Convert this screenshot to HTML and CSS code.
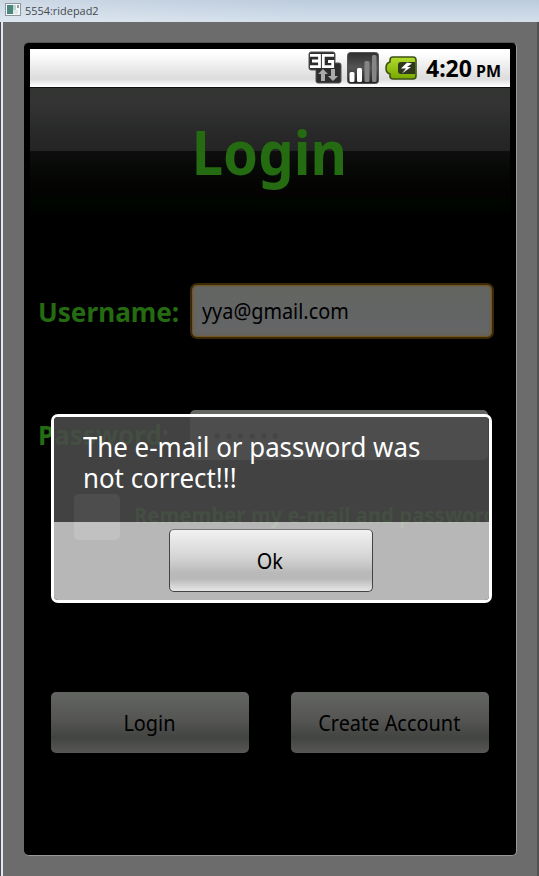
FILE: index.html
```html
<!DOCTYPE html>
<html lang="en">
<head>
<meta charset="utf-8">
<title>5554:ridepad2</title>
<link rel="stylesheet" href="styles.css">
</head>
<body>
<div class="window">
  <header class="titlebar">
    <svg class="app-icon" width="16" height="13" viewBox="0 0 16 13"><rect x=".5" y=".5" width="15" height="12" fill="#f4f8f8" stroke="#8c989f"/><rect x="2" y="2" width="6" height="9" fill="#4d8581"/><path d="M8 2h3v5H8z" fill="#bfd5d2"/><path d="M8 7h5v4H8z" fill="#dce9e6"/><path d="M13 2v3" stroke="#444"/></svg>
    <span class="window-title">5554:ridepad2</span>
  </header>
  <main class="desk">
    <div class="device">
      <div class="status">
        <svg class="net" width="34" height="33" viewBox="0 0 34 33"><path d="M3 1h22q2 0 2 2v9h4q2 0 2 2v16q0 2-2 2H10q-2 0-2-2V19H3q-2 0-2-2V3q0-2 2-2z" fill="#2d2d2d" stroke="#555"/><path d="M2 4.300h9.500v11.400H2M4 10h7.500M26 4.300H15.300v11.400h9.400v-5.200H20" fill="none" stroke="#fff" stroke-width="2.800"/><path d="M15 18l5 5h-3v7h-4v-7h-3zM25 30l-5-5h3v-7h4v7h3z" fill="#aaa"/></svg>
        <svg class="signal" width="32" height="32" viewBox="0 0 32 32"><defs><linearGradient id="sg" x2="0" y2="1"><stop stop-color="#303030"/><stop offset=".5" stop-color="#555"/><stop offset="1" stop-color="#222"/></linearGradient></defs><rect x=".5" y=".5" width="31" height="31" rx="3" fill="url(#sg)" stroke="#555"/><rect x="2.500" y="20" width="5" height="10" rx="1.500" fill="#fff"/><rect x="10" y="16" width="5" height="14" rx="1.500" fill="#fff"/><rect x="17.500" y="9" width="5" height="21" rx="1.500" fill="#858585"/><rect x="25" y="3" width="4.500" height="27" rx="1.500" fill="#858585"/></svg>
        <svg class="battery" width="32" height="24" viewBox="0 0 32 24"><defs><linearGradient id="bg" x2="0" y2="1"><stop stop-color="#b0dc2c"/><stop offset="1" stop-color="#78a800"/></linearGradient></defs><path d="M8 1h20q3 0 3 3v16q0 3-3 3H8q-3 0-3-3v-2q-4-1-4-6t4-6V4q0-3 3-3z" fill="url(#bg)" stroke="#3d5214" stroke-width="1.600"/><path d="M16 6h14v12H16q-3 0-3-3V9q0-3 3-3z" fill="#30371f"/><path d="M22 6.500l-6 6h5l-4 5 9-6.500h-4l5-3.500z" fill="#fff"/></svg>
        <span class="clock"><span class="fit time">4:20</span><span class="fit meridiem">PM</span></span>
      </div>
      <div class="app">
        <div class="banner"><h1 class="fit">Login</h1></div>
        <div class="row user-row"><label class="fit">Username:</label><div class="field focused"><span class="fit email">yya@gmail.com</span></div></div>
        <div class="row pass-row"><label class="fit">Password:</label><div class="field"><span class="dots">••••••</span></div></div>
        <div class="row remember"><i class="check"></i><span class="fit remember-text">Remember my e-mail and password</span></div>
        <div class="actions"><div class="btn dim"><span class="fit">Login</span></div><div class="btn dim"><span class="fit">Create Account</span></div></div>
      </div>
      <section class="dialog" role="alertdialog">
        <div class="message"><span class="fit">The e-mail or password was<br>not correct!!!</span></div>
        <div class="dialog-foot"><div class="btn ok"><span class="fit">Ok</span></div></div>
      </section>
    </div>
  </main>
</div>
</body>
</html>
```

FILE: styles.css
```css
* { box-sizing: border-box; }
body { margin: 0; font-family: "Noto Sans", sans-serif; color: #000; }
.window { width: 539px; height: 876px; display: flex; flex-direction: column; overflow: hidden; background: #6c6c6c; }
.titlebar { height: 22px; flex: none; display: flex; align-items: flex-start; gap: 4px; padding: 3px 0 0 5px; background: linear-gradient(90deg, rgba(255,255,255,.25), transparent 60%), linear-gradient(#bccbdc, #d3dfeb); }
.window-title { font: 11.5px/16px "Open Sans", sans-serif; color: #44494e; transform: scaleX(.95); transform-origin: left; }
.desk { flex: 1; border-left: 1px solid #4b4d55; box-shadow: inset 2px 0 #e4e6f0, inset -2px 0 #525252; padding: 20px 22px 20px 22px; }
.device { position: relative; margin-left: 1px; width: 493px; height: 814px; padding: 6px; background: #000; border: solid #565656; border-width: 1px 1px 1px 0; border-right-color: #999; border-bottom-color: #999; border-radius: 5px; }
.fit { display: inline-block; white-space: nowrap; transform-origin: left; }
.status { width: 480px; height: 38px; display: flex; align-items: flex-start; background: linear-gradient(#fff 10%, #dedede 75%, #dedede 80%, #fff 98%); }
.net { margin: 2px 5px 0 278px; }
.signal { margin-top: 3px; }
.battery { margin: 7px 0 0 6px; }
.clock { display: flex; align-items: baseline; margin: 2px 0 0 9px; font-weight: 700; line-height: 34px; }
.time { font-size: 23px; width: 50px; }
.meridiem { font-size: 16px; }
.app { width: 480px; height: 762px; overflow: hidden; }
.banner { height: 127px; text-align: center; border-top: 1px solid #111; background: linear-gradient(#323432 0, #333433 16px, #2f2f30 28px, #292a29 40px, #232423 63px, #0e0e0e 63px, #050805 85px, #040202 106px, #000600 112px, #000300 122px, #000 127px); }
h1 { margin: 0; font-size: 61px; line-height: 128px; color: #246b12; }
h1.fit { transform-origin: center; transform: translateX(-1px) scaleX(.92); }
.row { display: flex; align-items: center; }
label { width: 152px; font-size: 26px; font-weight: 700; line-height: 36px; color: #246b12; }
label.fit { transform: translateY(1px) scaleX(1.005); }
.user-row { margin: 69px 0 0 8px; height: 56px; }
.field { width: 298px; height: 50px; border-radius: 5px; background: linear-gradient(#646662, #636566 70%, #666563); display: flex; align-items: center; }
.focused { width: 304px; height: 56px; border: 2px solid #3b2809; border-radius: 7px; box-shadow: inset 0 0 0 1px #6f571f, inset 0 0 4px #70593b; padding-left: 10px; }
.email { font-size: 22.5px; line-height: 30px; transform: scaleX(.882); }
.pass-row { margin: 71px 0 0 8px; height: 50px; }
.pass-row label.fit { transform: none; }
.dots { padding-left: 23px; letter-spacing: 3.4px; font-size: 22px; line-height: 30px; color: #222; }
.remember { margin: 34px 0 0 44px; height: 46px; width: 415px; overflow: hidden; }
.check { flex: none; width: 46px; height: 46px; border-radius: 5px; background: #626462; margin-right: 14px; }
.remember-text { font-size: 22px; font-weight: 700; color: #246b12; transform: translateY(-3px) scaleX(.925); }
.actions { display: flex; gap: 42px; margin: 152px 0 0 21px; }
.btn { display: flex; justify-content: center; align-items: center; width: 198px; height: 61px; border-radius: 5px; font-size: 22.5px; }
.btn .fit { transform-origin: center; transform: translateX(-1px) scaleX(.885); }
.dim { background: linear-gradient(#636563, #555654 45%, #424442 75%, #4c4d4b 85%, #565654); }
.dialog { position: absolute; left: 27px; top: 371px; width: 441px; height: 189px; border: 3px solid #fff; border-radius: 7px; overflow: hidden; display: flex; flex-direction: column; }
.message { height: 105px; padding: 15px 0 0 29px; background: rgba(73,74,73,.89); color: #fff; font-size: 26.500px; line-height: 31px; }
.message .fit { transform: scaleX(.975); }
.dialog-foot { flex: 1; display: flex; padding: 7px 0 0 115px; background: rgba(203,203,203,.9); }
.ok { width: 204px; height: 63px; background: linear-gradient(#f2f2f2, #d4d4d4 45%, #b9b9b9 70%, #b9b9b9 80%, #e6e6e6); border: 1px solid #444; border-top-color: #777; }
```
